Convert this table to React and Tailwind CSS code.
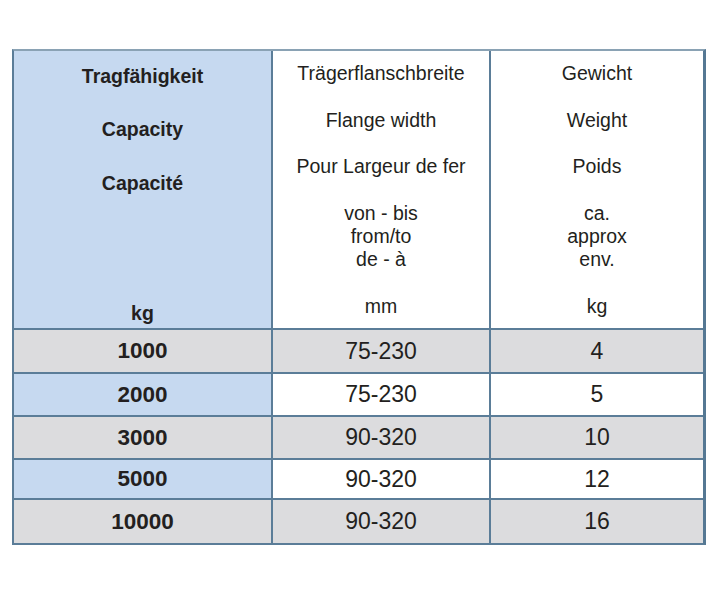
export default function App() {
  const rows = [
    { cap: "1000", w: "75-230", kg: "4", h: "h-[44px]", gray: true },
    { cap: "2000", w: "75-230", kg: "5", h: "h-[43px]", gray: false },
    { cap: "3000", w: "90-320", kg: "10", h: "h-[43px]", gray: true },
    { cap: "5000", w: "90-320", kg: "12", h: "h-[40px]", gray: false },
    { cap: "10000", w: "90-320", kg: "16", h: "h-[45px]", gray: true },
  ];
  const font = { fontFamily: '"Liberation Sans", Arial, sans-serif' };
  return (
    <div className="w-[717px] h-[600px] bg-white text-[#231f20]" style={font}>
      <div className="pt-[49px] pl-[12px]">
        <div className="w-[694px] border-l-2 border-t-2 border-b-2 border-r-[3px] border-l-[#5b7d98] border-b-[#5b7d98] border-r-[#557893] border-t-[#8aa2b4]">
          {/* header */}
          <div className="flex h-[277px]">
            <div className="w-[257px] bg-[#c6d9f0] flex flex-col items-center pt-[13px] text-[19.5px] font-bold leading-[24px]">
              <div>Tragfähigkeit</div>
              <div className="mt-[29px]">Capacity</div>
              <div className="mt-[30px]">Capacité</div>
              <div className="mt-[106px]">kg</div>
            </div>
            <div className="w-[2px] bg-[#5b7d98]" />
            <div className="w-[216px] bg-white flex flex-col items-center pt-[11px] text-[19.5px] leading-[23.3px]">
              <div>Trägerflanschbreite</div>
              <div className="h-[23.3px]" />
              <div>Flange width</div>
              <div className="h-[23.3px]" />
              <div>Pour Largeur de fer</div>
              <div className="h-[23.3px]" />
              <div>von - bis</div>
              <div>from/to</div>
              <div>de - à</div>
              <div className="h-[23.3px]" />
              <div>mm</div>
            </div>
            <div className="w-[2px] bg-[#5b7d98]" />
            <div className="flex-1 bg-white flex flex-col items-center pt-[11px] text-[19.5px] leading-[23.3px]">
              <div>Gewicht</div>
              <div className="h-[23.3px]" />
              <div>Weight</div>
              <div className="h-[23.3px]" />
              <div>Poids</div>
              <div className="h-[23.3px]" />
              <div>ca.</div>
              <div>approx</div>
              <div>env.</div>
              <div className="h-[23.3px]" />
              <div>kg</div>
            </div>
          </div>
          {rows.map((r) => (
            <div key={r.cap} className={`flex border-t-2 border-[#5b7d98] ${r.h} text-[23px]`}>
              <div className={`w-[257px] flex items-center justify-center font-bold text-[22.5px] ${r.gray ? "bg-[#dcdcde]" : "bg-[#c6d9f0]"}`}>
                {r.cap}
              </div>
              <div className="w-[2px] bg-[#5b7d98]" />
              <div className={`w-[216px] flex items-center justify-center ${r.gray ? "bg-[#dcdcde]" : "bg-white"}`}>
                {r.w}
              </div>
              <div className="w-[2px] bg-[#5b7d98]" />
              <div className={`flex-1 flex items-center justify-center ${r.gray ? "bg-[#dcdcde]" : "bg-white"}`}>
                {r.kg}
              </div>
            </div>
          ))}
        </div>
      </div>
    </div>
  );
}
